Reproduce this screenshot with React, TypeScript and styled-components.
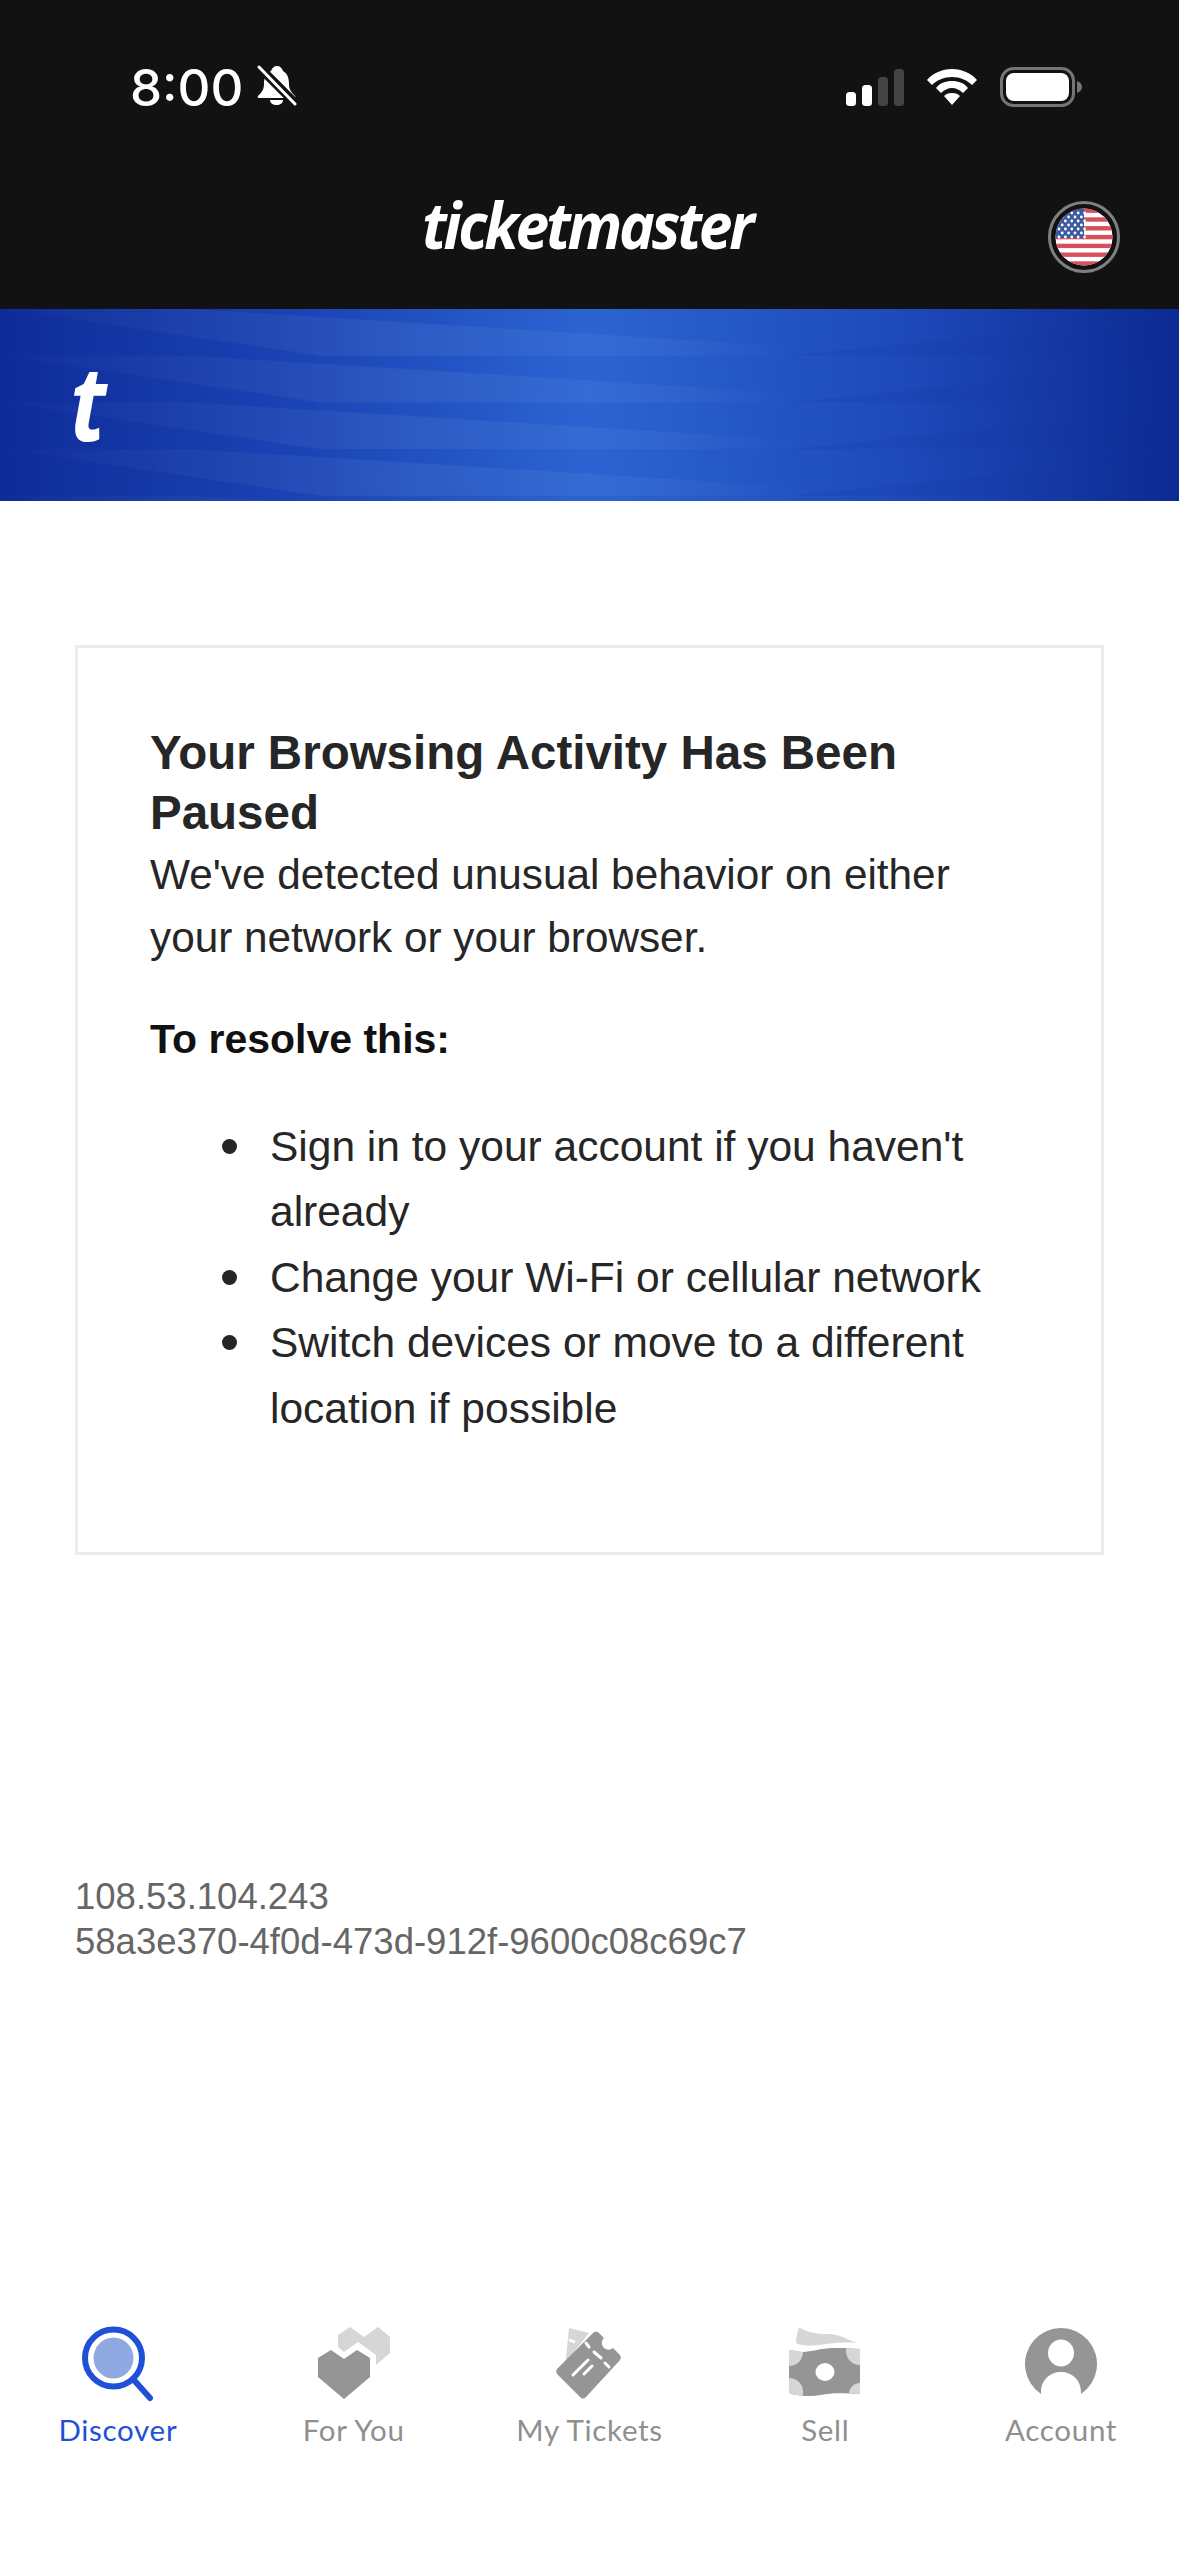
import { createGlobalStyle, styled } from "styled-components";

const GlobalStyle = createGlobalStyle`
    html, body {
        margin: 0;
        padding: 0;
        background: #fff;
    }
`;

const RootDiv = styled.div`
    width: 1179px;
    height: 2556px;
    display: flex;
    flex-direction: column;
    overflow: hidden;
    font-family: "Liberation Sans", Arial, sans-serif;
`;

const TopArea = styled.header`
    height: 309px;
    background: #121212;
    display: flex;
    flex-direction: column;
`;

const StatusBar = styled.div`
    height: 106px;
    padding: 0 96px 0 130px;
    display: flex;
    justify-content: space-between;
    align-items: flex-end;
`;

const StatusLeft = styled.div`
    display: flex;
    align-items: flex-end;
    gap: 14px;
`;

const Clock = styled.span`
    font-family: Inter, sans-serif;
    font-size: 51px;
    font-weight: 500;
    line-height: 37px;
    color: #fff;
`;

const StatusRight = styled.div`
    display: flex;
    align-items: flex-end;
    gap: 22px;
`;

const BrandRow = styled.div`
    flex: 1;
    display: flex;
    align-items: center;
    justify-content: space-between;
    padding: 58px 59px 0 422px;
`;

const Wordmark = styled.span`
    font-family: "Open Sans", sans-serif;
    font-size: 64px;
    font-style: italic;
    font-weight: 700;
    letter-spacing: -3.4px;
    color: #fff;
    margin-bottom: 24px;
    transform: scaleX(0.945);
    transform-origin: left center;
`;

const Banner = styled.div`
    position: relative;
    height: 192px;
    padding-left: 70px;
    display: flex;
    align-items: center;
    background: linear-gradient(90deg, #0e2c99 0%, #1a43b4 25%, #2b64d2 50%, #1e4abb 76%, #0c2a93 100%);
`;

const BannerWaves = styled.svg`
    position: absolute;
    inset: 0;
    width: 100%;
    height: 100%;
`;

const BannerLetter = styled.span`
    position: relative;
    font-family: "Open Sans", sans-serif;
    font-size: 104px;
    font-style: italic;
    font-weight: 700;
    line-height: 1;
    color: #fff;
    margin-top: -8px;
    transform: scaleX(0.85);
    transform-origin: left center;
`;

const Main = styled.main`
    flex: 1;
    padding: 144px 75px 0;
`;

const Card = styled.section`
    box-sizing: border-box;
    height: 910px;
    border: 3px solid #ebebeb;
    padding: 75px 72px 0;
`;

const Title = styled.h1`
    margin: 0;
    font-size: 47.5px;
    font-weight: 700;
    line-height: 60px;
    color: #262626;
`;

const Intro = styled.p`
    margin: 0;
    font-size: 42.3px;
    line-height: 63px;
    color: #262626;
`;

const ResolveHeading = styled.p`
    margin: 40px 0 0;
    font-size: 41px;
    font-weight: 700;
    line-height: 60px;
    color: #111;
`;

const Steps = styled.ul`
    margin: 45px 0 0;
    padding: 0 0 0 72px;
    list-style: none;
    font-size: 42.5px;
    line-height: 65.4px;
    color: #262626;
`;

const Step = styled.li`
    display: grid;
    grid-template-columns: 15px 1fr;
    column-gap: 33px;

    &::before {
        content: "";
        width: 15px;
        height: 15px;
        margin-top: 25px;
        border-radius: 50%;
        background: #262626;
    }
`;

const Trace = styled.div`
    margin-top: 320px;
    font-size: 36.5px;
    line-height: 44.5px;
    color: #666;
`;

const TabBar = styled.nav`
    height: 256px;
    padding-top: 26px;
    box-sizing: border-box;
    display: grid;
    grid-template-columns: repeat(5, 1fr);
    align-items: start;
`;

const Tab = styled.div`
    display: flex;
    flex-direction: column;
    align-items: center;
`;

const TabIcon = styled.svg`
    width: 80px;
    height: 76px;
`;

const TabLabel = styled.span<{ $active?: boolean }>`
    margin-top: 10px;
    font-family: Lato, sans-serif;
    font-size: 29.5px;
    letter-spacing: 0.7px;
    line-height: 36px;
    color: ${p => (p.$active ? "#1f50d8" : "#8f8f8f")};
`;

const GRAY = "#959595";
const LIGHT = "#d6d6d6";

function BellOff() {
    return (
        <svg width="40" height="41" viewBox="0 0 40 41">
            <path
                d="M20 1c3 0 5 2 6 5 5 3 6 8 6 13 0 5 2 8 6 12 1 1 0 2-1 2H2c-1 0-2-1-1-2 4-4 6-7 6-12 0-5 1-10 7-13 1-3 3-5 6-5z"
                fill="#fff"
            />
            <path d="M13 35h13c0 3-3 5-6.500 5S13 38 13 35z" fill="#fff" />
            <path d="M0 0l40 40" stroke="#121212" strokeWidth="9" />
            <path d="M2 2l36 37" stroke="#fff" strokeWidth="3" strokeLinecap="round" />
        </svg>
    );
}

function SignalIcon() {
    return (
        <svg width="58" height="38" viewBox="0 0 58 38">
            <rect x="0" y="24" width="10" height="14" rx="3.500" fill="#fff" />
            <rect x="16" y="17" width="10" height="21" rx="3.500" fill="#fff" />
            <rect x="32" y="9" width="10" height="29" rx="3.500" fill="#444" />
            <rect x="48" y="1" width="10" height="37" rx="3.500" fill="#444" />
        </svg>
    );
}

function WifiIcon() {
    return (
        <svg width="52" height="38" viewBox="0 0 52 38">
            <path d="M26 1C16 1 7 5 1 12l5 5c5-5 12-8 20-8s15 3 20 8l5-5C45 5 36 1 26 1z" fill="#fff" />
            <path d="M26 13c-7 0-12 2-16 7l5 5c3-3 7-5 11-5s8 2 11 5l5-5c-4-5-9-7-16-7z" fill="#fff" />
            <path d="M26 25c-4 0-6 1-8 3l8 9 8-9c-2-2-4-3-8-3z" fill="#fff" />
        </svg>
    );
}

function BatteryIcon() {
    return (
        <svg width="83" height="40" viewBox="0 0 83 40" style={{ marginBottom: -1 }}>
            <rect x="1.500" y="1.500" width="72" height="37" rx="12" fill="none" stroke="#757575" strokeWidth="3" />
            <rect x="6" y="6" width="63" height="28" rx="8" fill="#fff" />
            <path d="M77 14c3 1 5 3 5 6s-2 5-5 6z" fill="#757575" />
        </svg>
    );
}

function FlagIcon() {
    const stripes = Array.from({ length: 13 }, (_, i) => i);
    const stars: [number, number][] = [];
    for (let row = 0; row < 7; row++) {
        for (let col = 0; col < (row % 2 ? 4 : 5); col++) {
            stars.push([11 + col * 6.4 + (row % 2 ? 3.2 : 0), 12 + row * 4]);
        }
    }
    return (
        <svg width="72" height="72" viewBox="0 0 72 72">
            <defs>
                <clipPath id="flag-clip">
                    <circle cx="36" cy="36" r="28.500" />
                </clipPath>
            </defs>
            <circle cx="36" cy="36" r="34.500" fill="none" stroke="#808080" strokeWidth="3" />
            <g clipPath="url(#flag-clip)">
                <rect x="7" y="7" width="58" height="58" fill="#fff" />
                {stripes
                    .filter(i => i % 2 === 0)
                    .map(i => (
                        <rect key={i} x="7" y={7.500 + i * 4.400} width="58" height="4.400" fill="#d5505a" />
                    ))}
                <rect x="7" y="7" width="29" height="30" fill="#3c5a9e" />
                {stars.map(([x, y]) => (
                    <circle key={`${x}-${y}`} cx={x} cy={y} r="1.400" fill="#fff" />
                ))}
            </g>
        </svg>
    );
}

function SearchGlyph() {
    return (
        <TabIcon viewBox="0 0 80 76">
            <ellipse cx="35.500" cy="32" rx="20" ry="20.500" fill="#91a9e2" />
            <circle cx="35.500" cy="32" r="28.500" fill="none" stroke="#2050d8" strokeWidth="6" />
            <path d="M55 53l17 19" stroke="#2050d8" strokeWidth="6" strokeLinecap="round" />
        </TabIcon>
    );
}

function HeartsGlyph() {
    return (
        <TabIcon viewBox="0 0 80 76">
            <polygon points="24,9 36,1 50,11 64,1 76,11 76,27 62,39 62,29 44,16 30,26 24,21" fill={LIGHT} />
            <polygon points="4,32 17,24 30,33 43,24 56,32 56,51 30,73 4,51" fill={GRAY} />
        </TabIcon>
    );
}

function TicketsGlyph() {
    return (
        <TabIcon viewBox="0 0 80 76">
            <path d="M20 2l20 5-23.500 30z" fill={LIGHT} />
            <path d="M20 14l6 2" stroke="#fff" strokeWidth="2.500" />
            <path
                d="M44 7q3-3 6 0l5 5a6.500 6.500 0 0 0 9 10l6 6q3 3 1 6L37 71q-3 3-6 0L9 49q-3-3-1-6z"
                fill={GRAY}
            />
            <path
                d="M37 17l3 4M45 26l7 6M56 37l4 4M24 49l15-15M35 48l8-8"
                stroke="#fff"
                strokeWidth="3"
                strokeLinecap="round"
            />
        </TabIcon>
    );
}

function CashGlyph() {
    return (
        <TabIcon viewBox="0 0 80 76">
            <defs>
                <clipPath id="note-clip">
                    <path d="M6 24C16 27 22 26 32 24 44 21 60 22 75 23V66Q75 68 73 68C58 67 44 67 36 69 26 71 16 70 6 68Q4 67 4 65V26Q4 24 6 24Z" />
                </clipPath>
            </defs>
            <path
                d="M15 2C24 6 30 8 42 8 54 8 62 13 72 17 60 16 50 17 40 18 30 20 20 20 13 18Q10 17 11 14L13 4Q14 1 15 2Z"
                fill={LIGHT}
            />
            <g clipPath="url(#note-clip)">
                <rect x="0" y="18" width="80" height="56" fill={GRAY} />
                <circle cx="4" cy="26" r="14" fill={LIGHT} />
                <circle cx="75" cy="25" r="14" fill={LIGHT} />
                <circle cx="4" cy="66" r="14" fill={LIGHT} />
                <circle cx="75" cy="68" r="11" fill={LIGHT} />
            </g>
            <ellipse cx="40" cy="46" rx="9.500" ry="9" fill="#fff" />
        </TabIcon>
    );
}

function AccountGlyph() {
    return (
        <TabIcon viewBox="0 0 80 76">
            <path d="M20 68A36 36 0 1 1 60 68V66C60 54 51 46 40 46S20 54 20 66Z" fill={GRAY} />
            <ellipse cx="40" cy="27" rx="13" ry="13.500" fill="#fff" />
        </TabIcon>
    );
}

const TABS = [
    { label: "Discover", glyph: <SearchGlyph />, active: true },
    { label: "For You", glyph: <HeartsGlyph /> },
    { label: "My Tickets", glyph: <TicketsGlyph /> },
    { label: "Sell", glyph: <CashGlyph /> },
    { label: "Account", glyph: <AccountGlyph /> },
];

function App() {
    return (
        <RootDiv>
            <GlobalStyle />
            <TopArea>
                <StatusBar>
                    <StatusLeft>
                        <Clock>8:00</Clock>
                        <BellOff />
                    </StatusLeft>
                    <StatusRight>
                        <SignalIcon />
                        <WifiIcon />
                        <BatteryIcon />
                    </StatusRight>
                </StatusBar>
                <BrandRow>
                    <Wordmark>ticketmaster</Wordmark>
                    <FlagIcon />
                </BrandRow>
            </TopArea>
            <Banner>
                <BannerWaves viewBox="0 0 1179 192" preserveAspectRatio="none">
                    <defs>
                        <linearGradient id="wave-light" gradientUnits="userSpaceOnUse" x1="0" y1="0" x2="800" y2="0">
                            <stop offset="0" stopColor="#fff" stopOpacity="0.01" />
                            <stop offset="0.5" stopColor="#fff" stopOpacity="0.06" />
                            <stop offset="0.85" stopColor="#fff" stopOpacity="0.04" />
                            <stop offset="1" stopColor="#fff" stopOpacity="0" />
                        </linearGradient>
                        <linearGradient id="wave-dark" gradientUnits="userSpaceOnUse" x1="790" y1="0" x2="1179" y2="0">
                            <stop offset="0" stopColor="#0a2a8a" stopOpacity="0.15" />
                            <stop offset="1" stopColor="#0a2a8a" stopOpacity="0" />
                        </linearGradient>
                        <pattern id="waves" width="1179" height="46.700" patternUnits="userSpaceOnUse">
                            <path d="M5 0L320 46.700H800V38L400 13 190 0z" fill="url(#wave-light)" />
                            <path d="M790 46.700L1170 8 1179 46.700z" fill="url(#wave-dark)" />
                        </pattern>
                    </defs>
                    <rect width="1179" height="192" fill="url(#waves)" />
                </BannerWaves>
                <BannerLetter>t</BannerLetter>
            </Banner>
            <Main>
                <Card>
                    <Title>Your Browsing Activity Has Been Paused</Title>
                    <Intro>We've detected unusual behavior on either your network or your browser.</Intro>
                    <ResolveHeading>To resolve this:</ResolveHeading>
                    <Steps>
                        <Step>Sign in to your account if you haven't already</Step>
                        <Step>Change your Wi-Fi or cellular network</Step>
                        <Step>Switch devices or move to a different location if possible</Step>
                    </Steps>
                </Card>
                <Trace>
                    108.53.104.243
                    <br />
                    58a3e370-4f0d-473d-912f-9600c08c69c7
                </Trace>
            </Main>
            <TabBar>
                {TABS.map(tab => (
                    <Tab key={tab.label}>
                        {tab.glyph}
                        <TabLabel $active={tab.active}>{tab.label}</TabLabel>
                    </Tab>
                ))}
            </TabBar>
        </RootDiv>
    );
}

export default App;
